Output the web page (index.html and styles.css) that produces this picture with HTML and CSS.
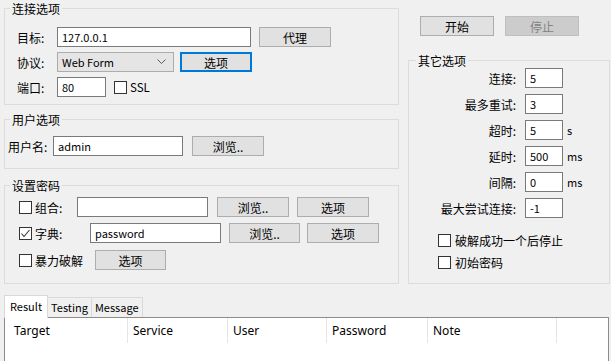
FILE: index.html
```html
<!DOCTYPE html>
<html lang="zh-CN">
<head>
    <meta charset="UTF-8">
    <title>破解工具</title>
    <link rel="stylesheet" href="styles.css">
</head>
<body>
    <div class="window">
        <div class="top">
            <div class="left">
                <fieldset class="group conn">
                    <legend>连接选项</legend>
                    <div class="body">
                        <div class="row">
                            <span class="label w40">目标:</span>
                            <input class="field w194" type="text" value="127.0.0.1">
                            <button class="btn ml8">代理</button>
                        </div>
                        <div class="row">
                            <span class="label w40">协议:</span>
                            <div class="combo">
                                <span>Web Form</span>
                                <svg width="9" height="6" viewBox="0 0 9 6"><polyline points="0.5,0.5 4.5,4.5 8.5,0.5" fill="none" stroke="#5a5a5a" stroke-width="1"/></svg>
                            </div>
                            <button class="btn focus ml6">选项</button>
                        </div>
                        <div class="row">
                            <span class="label w40">端口:</span>
                            <input class="field w49" type="text" value="80">
                            <span class="check ml8"></span>
                            <span class="ml3 latin">SSL</span>
                        </div>
                    </div>
                </fieldset>

                <fieldset class="group user">
                    <legend>用户选项</legend>
                    <div class="body">
                        <div class="row">
                            <span class="label w45">用户名:</span>
                            <input class="field w130" type="text" value="admin">
                            <button class="btn ml9">浏览..</button>
                        </div>
                    </div>
                </fieldset>

                <fieldset class="group pass">
                    <legend>设置密码</legend>
                    <div class="body">
                        <div class="row">
                            <span class="check"></span>
                            <span class="label ml3 w42">组合:</span>
                            <input class="field w131" type="text" value="">
                            <button class="btn ml9">浏览..</button>
                            <button class="btn ml8">选项</button>
                        </div>
                        <div class="row">
                            <span class="check on">
                                <svg width="11" height="11" viewBox="0 0 11 11"><polyline points="1.5,5.5 4,8.5 9.5,2" fill="none" stroke="#333" stroke-width="1.1"/></svg>
                            </span>
                            <span class="label ml3 w55">字典:</span>
                            <input class="field w131" type="text" value="password">
                            <button class="btn w71 ml8">浏览..</button>
                            <button class="btn ml7">选项</button>
                        </div>
                        <div class="row r3">
                            <span class="check"></span>
                            <span class="label ml3 w60">暴力破解</span>
                            <button class="btn w71">选项</button>
                        </div>
                    </div>
                </fieldset>
            </div>

            <div class="right">
                <div class="actions">
                    <button class="btn w74">开始</button>
                    <button class="btn w74" disabled>停止</button>
                </div>
                <fieldset class="group other">
                    <legend>其它选项</legend>
                    <div class="body">
                        <div class="row">
                            <span class="rlabel">连接:</span>
                            <input class="field w38" type="text" value="5">
                        </div>
                        <div class="row">
                            <span class="rlabel">最多重试:</span>
                            <input class="field w38" type="text" value="3">
                        </div>
                        <div class="row">
                            <span class="rlabel">超时:</span>
                            <input class="field w38" type="text" value="5">
                            <span class="unit">s</span>
                        </div>
                        <div class="row">
                            <span class="rlabel">延时:</span>
                            <input class="field w38" type="text" value="500">
                            <span class="unit">ms</span>
                        </div>
                        <div class="row">
                            <span class="rlabel">间隔:</span>
                            <input class="field w38" type="text" value="0">
                            <span class="unit">ms</span>
                        </div>
                        <div class="row">
                            <span class="rlabel">最大尝试连接:</span>
                            <input class="field w38" type="text" value="-1">
                        </div>
                        <div class="opt first">
                            <span class="check"></span>
                            <span class="ml4">破解成功一个后停止</span>
                        </div>
                        <div class="opt">
                            <span class="check"></span>
                            <span class="ml4">初始密码</span>
                        </div>
                    </div>
                </fieldset>
            </div>
        </div>

        <div class="tab-strip">
            <div class="tab active">Result</div>
            <div class="tab">Testing</div>
            <div class="tab">Message</div>
        </div>
        <div class="panel">
            <div class="thead">
                <div class="th c1">Target</div>
                <div class="th c2">Service</div>
                <div class="th c3">User</div>
                <div class="th c4">Password</div>
                <div class="th c5">Note</div>
            </div>
        </div>
    </div>
</body>
</html>
```

FILE: styles.css
```css
* {
    box-sizing: border-box;
}

body {
    margin: 0;
    background: #f0f0f0;
    font-family: "Noto Sans CJK SC", sans-serif;
    font-size: 12px;
    color: #000;
    overflow: hidden;
}

.window {
    width: 611px;
    height: 361px;
    padding-left: 4px;
}

.top {
    display: flex;
}

.left {
    width: 395px;
}

.right {
    width: 202px;
    margin-left: 9px;
}

/* group boxes */
.group {
    border: 1px solid #dcdcdc;
    margin: 0;
    padding: 0;
    min-width: 0;
}

.group legend {
    font-size: 12px;
    line-height: 15px;
    padding: 0 2px;
    margin-left: 5px;
}

.conn {
    margin-top: 1px;
}

.conn .body {
    padding: 11px 0 7px 12px;
    display: flex;
    flex-direction: column;
    gap: 5px;
}

.user {
    margin-top: 7px;
}

.user .body {
    padding: 9px 0 12px 3px;
}

.pass {
    margin-top: 9px;
}

.pass .body {
    padding: 4px 0 13px 14px;
    display: flex;
    flex-direction: column;
    gap: 6px;
}

.pass .r3 {
    margin-top: 1px;
}

.other {
    margin-top: 17px;
}

.other legend {
    margin-left: 7px;
}

.other .body {
    padding: 0 0 13px 0;
    display: flex;
    flex-direction: column;
    gap: 6px;
}

.row {
    display: flex;
    align-items: center;
    height: 20px;
}

.label {
    flex: none;
}

.latin {
    font-size: 11.5px;
}

/* controls */
.field {
    height: 20px;
    border: 1px solid #7a7a7a;
    background: #fff;
    padding: 0 4px;
    font-family: "Noto Sans CJK SC", sans-serif;
    font-size: 11px;
    color: #000;
    outline: none;
    margin: 0;
}

.btn {
    width: 72px;
    height: 20px;
    margin: 0;
    padding: 0;
    border: 1px solid #adadad;
    background: #e1e1e1;
    font-family: "Noto Sans CJK SC", sans-serif;
    font-size: 12px;
    color: #000;
    flex: none;
}

.btn.focus {
    border: 2px solid #0078d7;
}

.btn:disabled {
    background: #cccccc;
    border-color: #bfbfbf;
    color: #838383;
}

.combo {
    width: 117px;
    height: 20px;
    border: 1px solid #acacac;
    background: #e5e5e5;
    display: flex;
    align-items: center;
    justify-content: space-between;
    padding: 0 7px 0 4px;
    font-size: 11px;
    flex: none;
}

.combo svg {
    display: block;
}

.check {
    width: 13px;
    height: 13px;
    border: 1px solid #333;
    background: #fff;
    flex: none;
    display: flex;
    align-items: center;
    justify-content: center;
}

.check svg {
    display: block;
}

/* right column */
.actions {
    display: flex;
    gap: 11px;
    padding: 16px 0 0 12px;
}

.rlabel {
    width: 107px;
    margin-right: 9px;
    text-align: right;
    flex: none;
}

.unit {
    margin-left: 4px;
    font-size: 11px;
}

.opt {
    display: flex;
    align-items: center;
    height: 16px;
    padding-left: 29px;
}

.opt.first {
    margin-top: 8px;
}

/* widths and gaps */
.w38 { width: 38px; }
.w40 { width: 40px; }
.w42 { width: 42px; }
.w45 { width: 45px; }
.w49 { width: 49px; }
.w55 { width: 55px; }
.w60 { width: 60px; }
.w71 { width: 71px; }
.w74 { width: 74px; }
.w130 { width: 130px; }
.w131 { width: 131px; }
.w194 { width: 194px; }
.ml3 { margin-left: 3px; }
.ml4 { margin-left: 4px; }
.ml6 { margin-left: 6px; }
.ml7 { margin-left: 7px; }
.ml8 { margin-left: 8px; }
.ml9 { margin-left: 9px; }

/* tabs and result list */
.tab-strip {
    display: flex;
    align-items: flex-end;
    height: 22px;
    margin-top: 11px;
}

.tab {
    height: 20px;
    padding: 0 3px;
    border: 1px solid #d9d9d9;
    border-bottom: none;
    background: #f0f0f0;
    font-size: 11px;
    line-height: 19px;
    margin-left: -1px;
}

.tab.active {
    height: 23px;
    margin-left: 0;
    margin-bottom: -1px;
    padding: 0 5px;
    background: #fff;
    line-height: 20px;
    position: relative;
    z-index: 1;
}

.panel {
    width: 605px;
    height: 60px;
    border: 1px solid #8c8c8c;
    background: #fff;
}

.thead {
    display: flex;
    height: 25px;
}

.th {
    border-right: 1px solid #e5e5e5;
    font-family: "Noto Sans", sans-serif;
    font-size: 12px;
    line-height: 25px;
    padding-left: 5px;
}

.c1 { width: 123px; padding-left: 9px; }
.c2 { width: 100px; }
.c3 { width: 99px; }
.c4 { width: 101px; }
.c5 { width: 129px; }
```
